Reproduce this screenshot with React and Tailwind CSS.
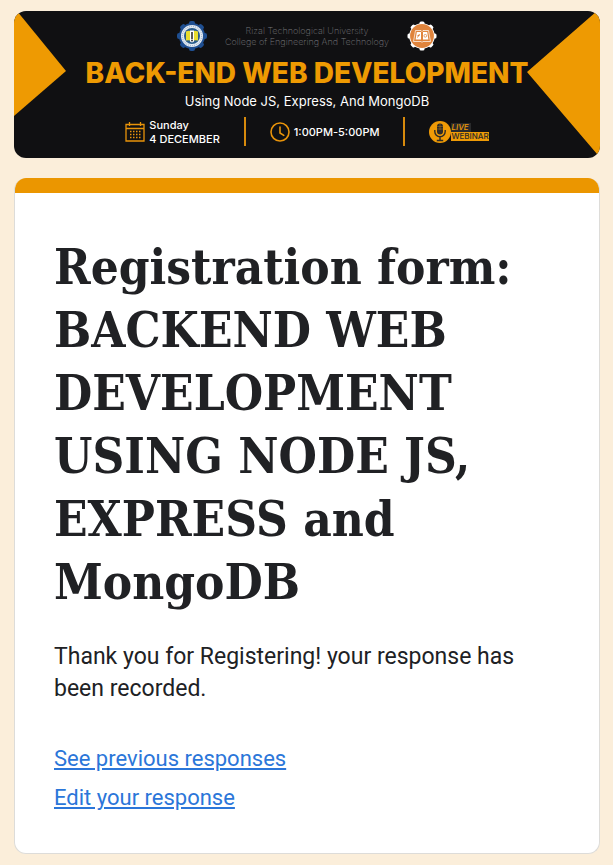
import React from "react";

const teeth = [0, 45, 90, 135, 180, 225, 270, 315];

function UniversitySeal() {
  return (
    <svg viewBox="0 0 30 30" className="size-[30px]" role="img" aria-label="University seal">
      <g fill="#1f4f91">
        {teeth.map((a) => (
          <rect key={a} x="12" y="0" width="6" height="7" rx="2" transform={`rotate(${a} 15 15)`} />
        ))}
        <circle cx="15" cy="15" r="13" />
      </g>
      <circle cx="15" cy="15" r="11" fill="#e4ebf2" />
      <circle cx="15" cy="15" r="9.6" fill="none" stroke="#a9bbd2" strokeWidth="1.2" strokeDasharray="1 1" />
      <circle cx="15" cy="15" r="8" fill="#2a5c8c" />
      <path d="M9 10.500q3-1.500 6 0q3-1.500 6 0v9q-3-1-6 .8q-3-1.800-6-.8z" fill="#e8dc2e" />
      <path d="M13 9.500h4v11l-2 1-2-1z" fill="#fff" />
      <path d="M15 11v7" stroke="#222" strokeWidth="1.500" />
      <circle cx="15" cy="19.500" r="1" fill="#333" />
    </svg>
  );
}

function CollegeSeal() {
  return (
    <svg viewBox="0 0 30 30" className="size-[30px]" role="img" aria-label="College seal">
      <g fill="#fff">
        {teeth.map((a) => (
          <rect key={a} x="12.500" y="0.500" width="5" height="6" rx="1.500" transform={`rotate(${a} 15 15)`} />
        ))}
        <circle cx="15" cy="15" r="12.800" />
      </g>
      <circle cx="15" cy="15" r="11.900" fill="#e0843c" />
      <path d="M6.500 20.500l2-11H14l1 1 1-1h5.500l2 11h-7.500l-1 .8-1-.8z" fill="#e0843c" stroke="#fff" strokeWidth="0.700" />
      <path d="M9.800 11h4.200v7.500H8.600zM16 11h4.200l1.200 7.500H16z" fill="#fff" />
      <path d="M10.500 16.500l2-3.500M10.500 14.500h2" stroke="#d67a35" strokeWidth="0.900" />
      <circle cx="18.300" cy="14.800" r="1.400" fill="none" stroke="#d67a35" strokeWidth="0.700" />
    </svg>
  );
}

function CalendarIcon() {
  return (
    <svg viewBox="0 0 20 20" className="size-5" fill="none" stroke="#e8930a" strokeWidth="1.300" aria-hidden="true">
      <path d="M1 2.500h18v16.500H1zM1 6.500h18M4.500 0v4M15.500 0v4" />
      <path d="M5 9.500h11M5 12.500h11M5 15.500h11" strokeWidth="1.500" strokeDasharray="1.500 1.500" />
    </svg>
  );
}

function ClockIcon() {
  return (
    <svg viewBox="0 0 20 20" className="size-5" fill="none" stroke="#e8930a" strokeWidth="1.600" strokeLinecap="round" aria-hidden="true">
      <circle cx="10" cy="10" r="9" />
      <path d="M10 5v6l3.800 2.400" />
    </svg>
  );
}

function MicIcon() {
  return (
    <svg viewBox="0 0 22 22" className="size-[22px]" aria-hidden="true">
      <circle cx="11" cy="11" r="11" fill="#ee9a06" />
      <rect x="8" y="2.500" width="6" height="11" rx="3" fill="#2b2a28" />
      <path d="M8 5.500h6M8 8h6M11 3v6" stroke="#b27a18" strokeWidth="0.500" />
      <path d="M5.800 9v1.500a5.200 5.200 0 0 0 10.400 0V9M11 15.700v3.500M7.800 19.500h6.400" fill="none" stroke="#2b2a28" strokeWidth="1.400" />
    </svg>
  );
}

function Banner() {
  return (
    <header className="relative overflow-hidden rounded-xl bg-[#101012] pt-2.5 pb-3 font-['Inter',sans-serif] text-white">
      <svg viewBox="0 0 52 147" className="absolute top-0 left-0 h-full w-[52px]" preserveAspectRatio="none" aria-hidden="true">
        <path d="M0 0H3L52 60L0 105z" fill="#ee9a02" />
      </svg>
      <svg viewBox="0 0 73 147" className="absolute top-0 right-0 h-full w-[73px]" preserveAspectRatio="none" aria-hidden="true">
        <path d="M73 0H70L0 61L70 143L73 147z" fill="#ee9a02" />
      </svg>
      <div className="flex items-center justify-center gap-[18px]">
        <UniversitySeal />
        <p className="w-[164px] text-center text-[9px] leading-[11px] font-extralight whitespace-nowrap text-[#77777b]">
          Rizal Technological University
          <br />
          College of Engineering And Technology
        </p>
        <CollegeSeal />
      </div>
      <p className="mt-1.5 text-center text-[28px] leading-8 font-extrabold whitespace-nowrap text-[#ee9a02]">
        BACK-END WEB DEVELOPMENT
      </p>
      <p className="mt-1 text-center text-[13px] leading-4 whitespace-nowrap">
        Using Node JS, Express, And MongoDB
      </p>
      <div className="mt-2 flex items-center justify-center gap-6">
        <div className="flex items-center gap-1">
          <CalendarIcon />
          <p className="text-[11px] leading-[14px] font-medium whitespace-nowrap">
            Sunday
            <br />4 DECEMBER
          </p>
        </div>
        <div className="h-[29px] w-0.5 bg-[#d78a0c]" />
        <div className="flex items-center gap-1">
          <ClockIcon />
          <p className="text-[11px] leading-[14px] font-medium whitespace-nowrap">1:00PM-5:00PM</p>
        </div>
        <div className="h-[29px] w-0.5 bg-[#d78a0c]" />
        <div className="flex items-center">
          <MicIcon />
          <div className="flex flex-col items-start text-[8px] leading-[9px] font-medium">
            <p className="bg-[#292a2b] pr-0.5 text-[#ee9a06] italic">LIVE</p>
            <p className="bg-[#ee9a06] text-[#2b2a28]">WEBINAR</p>
          </div>
        </div>
      </div>
    </header>
  );
}

export default function App() {
  return (
    <div className="min-h-screen bg-[#fbeeda] pt-[11px] pr-[13px] pb-3 pl-3.5">
      <Banner />
      <main className="mt-5 overflow-hidden rounded-xl border border-t-0 border-[#dddcd9] bg-white font-['Roboto',sans-serif] text-[#202124]">
        <div className="h-[15px] bg-[#eb9600]" />
        <div className="px-[39px] pt-[43px] pb-9">
          <h1 className="font-['DejaVu_Serif_Condensed','DejaVu_Serif',serif] text-[49px] leading-[63px] font-bold">
            Registration form: BACKEND WEB DEVELOPMENT USING NODE JS, EXPRESS and MongoDB
          </h1>
          <p className="mt-[27px] text-[23px] leading-8">
            Thank you for Registering! your response has been recorded.
          </p>
          <nav className="mt-[34px] flex flex-col items-start text-[22px] leading-[39px] text-[#2b76d9]">
            <a href="#responses" className="underline">See previous responses</a>
            <a href="#edit" className="underline">Edit your response</a>
          </nav>
        </div>
      </main>
    </div>
  );
}
